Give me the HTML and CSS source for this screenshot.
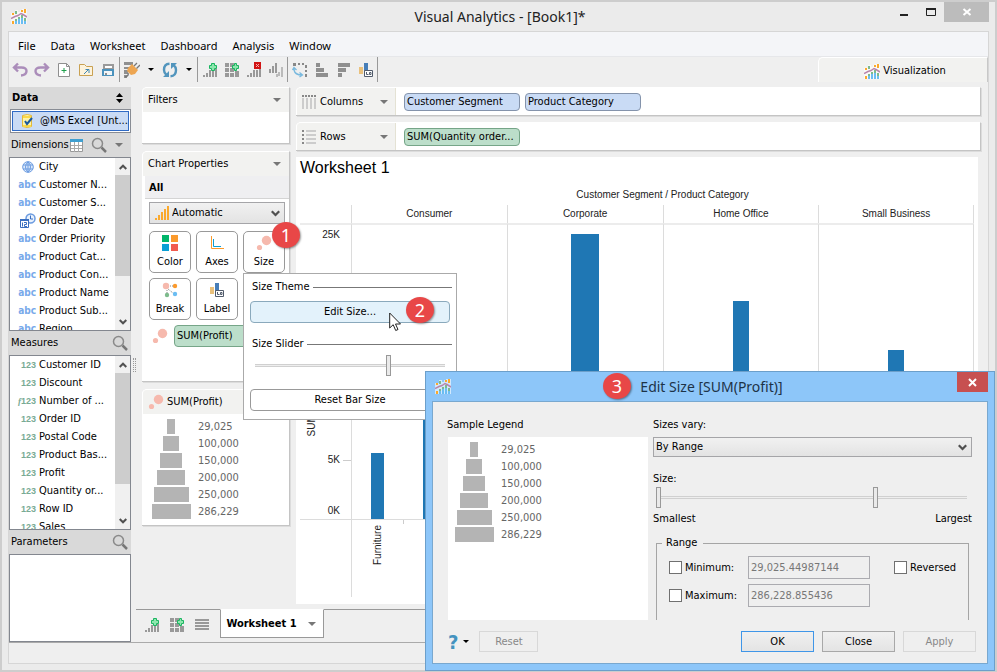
FILE: index.html
```
<!DOCTYPE html>
<html lang="en">
<head>
    <meta charset="UTF-8">
    <meta name="viewport" content="width=device-width, initial-scale=1.0">
    <title>Visual Analytics - [Book1]*</title>
    <link rel="stylesheet" href="styles.css">
</head>
<body>

<!-- shared icons -->
<svg class="sprite" aria-hidden="true">
    <symbol id="i-logo" viewBox="0 0 16 15">
        <path fill="#fff" opacity=".6" d="M0 4h4V1h3v2h2V1h2V0h5v15H0z"/>
        <path fill="#fba92c" d="M1 4h2v2H1zM10 1h2v2h-2zM13 0h2v4h-2zM1 12h2v3H1z"/>
        <path fill="#7dbb8c" d="M4 2h2v3H4zM4 10h2v2H4zM10 6h2v3h-2zM13 9h2v3h-2zM7 8h2v2H7z"/>
        <path fill="#6bbdf2" d="M4 12h2v3H4zM7 10h2v5H7zM10 9h2v6h-2zM13 12h2v3h-2z"/>
        <path fill="none" stroke="#b886ab" stroke-width="1.5" d="M0 9.5l4-2 3-1 3-2 2 1 4 2.500"/>
    </symbol>
    <symbol id="i-undo" viewBox="0 0 16 16">
        <path fill="none" stroke="#ab8dba" stroke-width="2.400" d="M6 1.500L2 5.500l4 4M2 5.500h7.500q5 0 5 3.500 0 4-5.500 4.500"/>
    </symbol>
    <symbol id="i-new" viewBox="0 0 16 16">
        <path fill="#fff" stroke="#8f8f8f" d="M2.500 1.500h8l3 3v10h-11z"/>
        <path fill="none" stroke="#8f8f8f" d="M10.500 1.500v3h3"/>
        <path stroke="#1fa04c" d="M5.500 8.500h5M8 6v5"/>
    </symbol>
    <symbol id="i-open" viewBox="0 0 16 16">
        <path fill="#fdf3dc" stroke="#c9a152" d="M1.500 2.500h5l2 2h6v9h-13z"/>
        <path fill="none" stroke="#3d87b5" d="M6 12l5-5M7.500 7.500h3.500v3.500"/>
    </symbol>
    <symbol id="i-save" viewBox="0 0 16 16">
        <path fill="#9a9a9a" d="M3 2h11v5H3z"/>
        <path fill="#fff" d="M5 4h7v2H5z"/>
        <path fill="#4a92bd" d="M2 7h12v7H2z"/>
        <path fill="#f2f5f7" d="M4 9h8v4H4z"/>
        <path fill="#8f8f8f" d="M5 11h2v2H5z"/>
    </symbol>
    <symbol id="i-plug" viewBox="0 0 16 16">
        <path fill="#8f8f8f" d="M0 0h9v3H0zM0 5h5v2H0zM0 8h4v4H0zM0 13h3v3H0z"/>
        <path fill="#eda551" d="M8 2l6 6-3 4-4 1-4-4 1-3z"/>
        <path fill="none" stroke="#777" stroke-width="1.300" d="M10 4l3-3M12.500 6.500L16 3M4 11q1 3-3 4"/>
    </symbol>
    <symbol id="i-refresh" viewBox="0 0 16 16">
        <path fill="none" stroke="#5295bd" stroke-width="2.400" d="M7.500 1.800Q2 2 2 8q0 3 2.500 5M8.500 14.200Q14 14 14 8q0-3-2.500-5"/>
        <path fill="#5295bd" d="M1 15h6V9zM15 1H9v6z"/>
    </symbol>
    <symbol id="i-add-bars" viewBox="0 0 16 16">
        <path fill="#999" d="M1 13h2v2H1zM4 11h2v4H4zM7 8h2v7H7zM10 9h2v6h-2zM13 7h2v8h-2z"/>
        <path fill="#8ee6ae" stroke="#1bb561" d="M9.500 1.500h3v2h2v3h-2v2h-3v-2h-2v-3h2z"/>
    </symbol>
    <symbol id="i-add-grid" viewBox="0 0 16 16">
        <path fill="#999" d="M1 1h4v4H1zM6 1h4v4H6zM1 6h4v4H1zM6 6h4v4H6zM11 9h4v2h-4zM1 11h4v4H1zM6 11h4v4H6zM11 11h4v4h-4z"/>
        <path fill="#8ee6ae" stroke="#1bb561" d="M10.500 1.500h2v2h2v3h-2v2h-2v-2h-2v-3h2z"/>
    </symbol>
    <symbol id="i-del-bars" viewBox="0 0 16 16">
        <path fill="#999" d="M1 13h2v2H1zM4 11h2v4H4zM7 8h2v7H7zM10 8h2v7h-2zM13 7h2v8h-2z"/>
        <path fill="#d21414" d="M8 0h7v7H8z"/>
        <path stroke="#f7b0b0" d="M10 2l3 3M13 2l-3 3"/>
    </symbol>
    <symbol id="i-sort" viewBox="0 0 16 16">
        <path fill="#999" d="M1 7h2v4H1zM4 4h2v7H4zM7 1h2v10H7z"/>
        <path fill="#bbb" d="M8 12h2v3H8zM10 10h2v4h-2zM13 5h2v10h-2z"/>
    </symbol>
    <symbol id="i-swap" viewBox="0 0 16 16">
        <path fill="#888" d="M1 1h3v3H1zM6 1h2v2H6zM10 1h2v2h-2zM13 3h2v3h-2zM13 8h2v2h-2zM13 12h2v3h-2z"/>
        <path fill="none" stroke="#79b9de" stroke-width="1.300" d="M2 5v3q1 5 8 5M.5 8L2 5.500 4.500 8M7.500 10.500l3 2.500-3 2"/>
    </symbol>
    <symbol id="i-asc" viewBox="0 0 16 16">
        <path fill="#8f8f8f" d="M2 1h4v4H2zM2 6h8v4H2zM2 11h12v4H2z"/>
    </symbol>
    <symbol id="i-desc" viewBox="0 0 16 16">
        <path fill="#8f8f8f" d="M2 1h12v4H2zM2 6h8v4H2zM2 11h4v4H2z"/>
    </symbol>
    <symbol id="i-label" viewBox="0 0 16 16">
        <path fill="#eac17c" d="M1 5h4v7H1z"/>
        <path fill="#477eb8" d="M6 1h4v11H6z"/>
        <path fill="#fff" stroke="#515b6b" d="M6.500 8.500h8v6h-8z"/>
        <path fill="none" stroke="#515b6b" d="M8.500 10v2.500h2M11.500 10.500h1.500v2h-1.500z"/>
    </symbol>
    <symbol id="i-size" viewBox="0 0 16 16">
        <circle cx="10.500" cy="5.500" r="4.700" fill="#f6b9ad"/>
        <circle cx="3.500" cy="12.500" r="2.600" fill="#f6b9ad"/>
    </symbol>
    <symbol id="i-search" viewBox="0 0 16 16">
        <circle cx="6.500" cy="6.500" r="5" fill="none" stroke="#8a8a8a" stroke-width="1.500"/>
        <path stroke="#777" stroke-width="2.500" d="M10.500 10.500L15 15"/>
    </symbol>
    <symbol id="i-down" viewBox="0 0 8 4"><path fill="currentColor" d="M0 0h8L4 4z"/></symbol>
    <symbol id="i-chevron" viewBox="0 0 8 6">
        <path fill="none" stroke="#505050" stroke-width="2" d="M.7 1L4 4.300 7.300 1"/>
    </symbol>
    <symbol id="i-globe" viewBox="0 0 12 12">
        <circle cx="6" cy="6" r="5.300" fill="#dbe9fb" stroke="#6b9be0"/>
        <path fill="none" stroke="#6b9be0" d="M1 4h10M1 8h10M6 1v10M6 .7q-5 5.300 0 10.600M6 .7q5 5.300 0 10.600"/>
    </symbol>
    <symbol id="i-date" viewBox="0 0 16 16">
        <circle cx="10.500" cy="5.500" r="4.500" fill="#e8f1fd" stroke="#6b9be0" stroke-width="1.500"/>
        <path fill="none" stroke="#3a6fc0" d="M10.500 2.500v3.500h2.500"/>
        <path fill="#fff" stroke="#3a6fc0" d="M.5 6.500h8v8h-8z"/>
        <path fill="#3a6fc0" d="M0 6h9v2H0z"/>
        <path fill="none" stroke="#3a6fc0" d="M2.500 9.500v4M4 9.500h2.500v2H4.500v2H7"/>
    </symbol>
</svg>

<div class="window">
    <header class="titlebar">
        <svg class="logo"><use href="#i-logo"/></svg>
        <h1>Visual Analytics - [Book1]*</h1>
        <div class="window-buttons">
            <button type="button" aria-label="Minimize"><svg width="10" height="10"><path fill="#222" d="M1 7h8v2H1z"/></svg></button>
            <button type="button" aria-label="Maximize"><svg width="10" height="10"><path fill="none" stroke="#222" d="M.5 1v7.500h9V1"/><path fill="#222" d="M0 1h10v2H0z"/></svg></button>
            <button type="button" class="close" aria-label="Close"><svg width="10" height="10"><path stroke="#fff" stroke-width="2" d="M1.500 2l7 6M8.500 2l-7 6"/></svg></button>
        </div>
    </header>

    <div class="frame">
        <nav class="menubar">
            <button type="button">File</button>
            <button type="button">Data</button>
            <button type="button">Worksheet</button>
            <button type="button">Dashboard</button>
            <button type="button">Analysis</button>
            <button type="button">Window</button>
        </nav>

        <div class="toolbar">
            <div class="tool-group first">
                <button type="button" aria-label="Undo"><svg><use href="#i-undo"/></svg></button>
                <button type="button" aria-label="Redo"><svg class="flip"><use href="#i-undo"/></svg></button>
                <button type="button" aria-label="New"><svg><use href="#i-new"/></svg></button>
                <button type="button" aria-label="Open"><svg><use href="#i-open"/></svg></button>
                <button type="button" aria-label="Save"><svg><use href="#i-save"/></svg></button>
            </div>
            <div class="tool-group">
                <button type="button" aria-label="Connect"><svg><use href="#i-plug"/></svg></button>
                <button type="button" class="caret" aria-label="Connect options"><svg><use href="#i-down"/></svg></button>
                <button type="button" aria-label="Refresh"><svg><use href="#i-refresh"/></svg></button>
                <button type="button" class="caret" aria-label="Refresh options"><svg><use href="#i-down"/></svg></button>
            </div>
            <div class="tool-group">
                <button type="button" aria-label="Add worksheet"><svg><use href="#i-add-bars"/></svg></button>
                <button type="button" aria-label="Add dashboard"><svg><use href="#i-add-grid"/></svg></button>
                <button type="button" aria-label="Delete worksheet"><svg><use href="#i-del-bars"/></svg></button>
                <button type="button" aria-label="Sort"><svg><use href="#i-sort"/></svg></button>
            </div>
            <div class="tool-group">
                <button type="button" aria-label="Swap axes"><svg><use href="#i-swap"/></svg></button>
                <button type="button" aria-label="Sort ascending"><svg><use href="#i-asc"/></svg></button>
                <button type="button" aria-label="Sort descending"><svg><use href="#i-desc"/></svg></button>
                <button type="button" aria-label="Show labels"><svg><use href="#i-label"/></svg></button>
            </div>
            <button type="button" class="view-tab"><svg class="logo"><use href="#i-logo"/></svg>Visualization</button>
        </div>

        <div class="workspace">
            <aside class="sidebar">
                <div class="side-head data-head">
                    <h2>Data</h2>
                    <svg width="7" height="10"><path d="M0 4h7L3.500 0zM0 6h7l-3.500 4z"/></svg>
                </div>
                <button type="button" class="data-source">
                    <svg width="14" height="14"><path fill="#fdf3a8" stroke="#e2b83a" d="M1.500 1.500q5-2 9 0v11q-4 2-9 0z"/><path fill="#fbd948" d="M2 2h8v2H2zM2 11h8v2H2z"/><path fill="none" stroke="#1b5a9c" stroke-width="2" d="M4 7l2 3 5-6"/></svg>
                    @MS Excel [Unt...
                </button>
                <div class="side-head">
                    <h3>Dimensions</h3>
                    <button type="button" aria-label="View data"><svg width="13" height="13"><path fill="#fff" stroke="#999" d="M.5.5h12v12H.5z"/><path fill="#3f9fd0" d="M0 0h13v3H0z"/><path fill="none" stroke="#aaa" d="M1 6.500h11M1 9.500h11M4.500 3v10M8.500 3v10"/></svg></button>
                    <button type="button" aria-label="Search dimensions"><svg width="16" height="16"><use href="#i-search"/></svg></button>
                    <button type="button" class="menu-arrow" aria-label="Dimension options"><svg width="8" height="4"><use href="#i-down"/></svg></button>
                </div>
                <div class="list">
                    <ul>
                        <li><svg width="12" height="12"><use href="#i-globe"/></svg>City</li>
                        <li><b class="abc">abc</b>Customer N...</li>
                        <li><b class="abc">abc</b>Customer S...</li>
                        <li><svg width="16" height="16"><use href="#i-date"/></svg>Order Date</li>
                        <li><b class="abc">abc</b>Order Priority</li>
                        <li><b class="abc">abc</b>Product Cat...</li>
                        <li><b class="abc">abc</b>Product Con...</li>
                        <li><b class="abc">abc</b>Product Name</li>
                        <li><b class="abc">abc</b>Product Sub...</li>
                        <li><b class="abc">abc</b>Region</li>
                    </ul>
                    <div class="scrollbar">
                        <svg class="up"><use href="#i-chevron"/></svg>
                        <div class="track"><div class="thumb" style="height:73%"></div></div>
                        <svg><use href="#i-chevron"/></svg>
                    </div>
                </div>
                <div class="side-head">
                    <h3>Measures</h3>
                    <button type="button" class="push" aria-label="Search measures"><svg width="16" height="16"><use href="#i-search"/></svg></button>
                </div>
                <div class="list">
                    <ul>
                        <li><b class="num">123</b>Customer ID</li>
                        <li><b class="num">123</b>Discount</li>
                        <li><b class="num"><i>f</i>123</b>Number of ...</li>
                        <li><b class="num">123</b>Order ID</li>
                        <li><b class="num">123</b>Postal Code</li>
                        <li><b class="num">123</b>Product Bas...</li>
                        <li><b class="num">123</b>Profit</li>
                        <li><b class="num">123</b>Quantity or...</li>
                        <li><b class="num">123</b>Row ID</li>
                        <li><b class="num">123</b>Sales</li>
                    </ul>
                    <div class="scrollbar">
                        <svg class="up"><use href="#i-chevron"/></svg>
                        <div class="track"><div class="thumb" style="height:80%"></div></div>
                        <svg><use href="#i-chevron"/></svg>
                    </div>
                </div>
                <div class="side-head">
                    <h3>Parameters</h3>
                    <button type="button" class="push" aria-label="Search parameters"><svg width="16" height="16"><use href="#i-search"/></svg></button>
                </div>
                <div class="list params"></div>
            </aside>

            <div class="splitter"></div>

            <div class="content">
                <div class="panes">
                    <section class="props">
                        <div class="card filters">
                            <div class="card-head"><h3>Filters</h3><svg><use href="#i-down"/></svg></div>
                        </div>

                        <div class="card chart-props">
                            <div class="card-head"><h3>Chart Properties</h3><svg><use href="#i-down"/></svg></div>
                            <h4>All</h4>
                            <div class="select-box mark-type">
                                <svg class="mark-icon" viewBox="0 0 14 14"><path fill="#fba92c" d="M0 12h2v2H0zM3 9h2v5H3zM6 6h2v8H6zM9 3h2v11H9zM12 0h2v14h-2z"/></svg>
                                <select aria-label="Chart type"><option>Automatic</option></select>
                                <svg class="arrow"><use href="#i-chevron"/></svg>
                            </div>
                            <div class="tiles">
                                <button type="button"><svg viewBox="0 0 16 16"><path fill="#00b56a" d="M0 0h7v7H0z"/><path fill="#fb9a2c" d="M9 0h7v7H9z"/><path fill="#0a9fd5" d="M0 9h7v7H0z"/><path fill="#f15b4e" d="M9 9h7v7H9z"/></svg>Color</button>
                                <button type="button"><svg viewBox="0 0 16 16"><path fill="none" stroke="#fb9a2c" d="M2.500 1v12.500H15"/><path fill="none" stroke="#0a9fd5" d="M4.500 4v7.500H12"/></svg>Axes</button>
                                <button type="button"><svg viewBox="0 0 16 16"><use href="#i-size"/></svg>Size</button>
                                <button type="button"><svg viewBox="0 0 16 16"><circle cx="4" cy="4" r="3.200" fill="#f6b9ad"/><circle cx="13" cy="4" r="2.200" fill="#fb9a2c"/><circle cx="5" cy="13" r="2.200" fill="#7dbb8c"/><circle cx="13" cy="12" r="2.200" fill="#6bbdf2"/><path stroke="#888" stroke-dasharray="1 1" d="M8 4h3M6 7l5 4M5 8v3"/></svg>Break</button>
                                <button type="button"><svg viewBox="0 0 16 16"><use href="#i-label"/></svg>Label</button>
                            </div>
                            <div class="size-field">
                                <svg width="16" height="16"><use href="#i-size"/></svg>
                                <span class="chip green">SUM(Profit)</span>
                            </div>
                        </div>

                        <div class="card">
                            <div class="card-head with-icon"><svg class="size-icon"><use href="#i-size"/></svg><h3>SUM(Profit)</h3></div>
                            <ul class="size-legend">
                                <li><span><i style="width:8px"></i></span>29,025</li>
                                <li><span><i style="width:16px"></i></span>100,000</li>
                                <li><span><i style="width:22px"></i></span>150,000</li>
                                <li><span><i style="width:28px"></i></span>200,000</li>
                                <li><span><i style="width:35px"></i></span>250,000</li>
                                <li><span><i style="width:39px"></i></span>286,229</li>
                            </ul>
                        </div>
                    </section>

                    <main>
                        <div class="card shelf">
                            <div class="shelf-head">
                                <svg class="shelf-icon" viewBox="0 0 14 14"><path fill="#888" d="M0 0h2v2H0zM3 0h2v2H3zM6 0h2v2H6zM9 0h2v2H9zM12 0h2v2h-2z"/><path fill="#ccc" d="M0 3h2v11H0zM4 3h2v11H4zM8 3h2v11H8zM12 3h2v11h-2z"/></svg>
                                <h3>Columns</h3>
                                <svg class="shelf-arrow"><use href="#i-down"/></svg>
                            </div>
                            <span class="chip">Customer Segment</span>
                            <span class="chip">Product Category</span>
                        </div>
                        <div class="card shelf">
                            <div class="shelf-head">
                                <svg class="shelf-icon" viewBox="0 0 14 14"><path fill="#888" d="M0 0h2v2H0zM0 4h2v2H0zM0 8h2v2H0zM0 12h2v2H0z"/><path fill="#ccc" d="M4 0h10v2H4zM4 4h10v2H4zM4 8h10v2H4zM4 12h10v2H4z"/></svg>
                                <h3>Rows</h3>
                                <svg class="shelf-arrow"><use href="#i-down"/></svg>
                            </div>
                            <span class="chip green">SUM(Quantity order...</span>
                        </div>

                        <div class="sheet">
                            <h2>Worksheet 1</h2>
                            <div class="chart">
                                <div class="chart-title">Customer Segment / Product Category</div>
                                <div class="corner"></div>
                                <div class="seg-name">Consumer</div>
                                <div class="seg-name">Corporate</div>
                                <div class="seg-name">Home Office</div>
                                <div class="seg-name last">Small Business</div>

                                <div class="axis">
                                    <span class="axis-title">SUM(Quantity ordered new)</span>
                                    <div class="ticks">
                                        <span>25K</span>
                                        <span class="tick">5K</span>
                                        <span>0K</span>
                                    </div>
                                </div>
                                <div class="plot narrow">
                                    <div class="bar" style="height:22.500%"></div>
                                    <div class="bar" style="height:48%"></div>
                                </div>
                                <div class="plot wide">
                                    <div class="bar" style="grid-column:2;height:96.800%"></div>
                                </div>
                                <div class="plot">
                                    <div class="bar" style="grid-column:2;height:74.200%"></div>
                                </div>
                                <div class="plot last">
                                    <div class="bar" style="grid-column:2;height:57.600%"></div>
                                </div>

                                <div class="corner"></div>
                                <div class="cats"><span>Furniture</span></div>
                                <div class="cats"></div>
                                <div class="cats"></div>
                                <div class="cats last"></div>
                            </div>
                        </div>
                    </main>
                </div>

                <div class="tabs">
                    <button type="button" aria-label="Add worksheet"><svg><use href="#i-add-bars"/></svg></button>
                    <button type="button" aria-label="Add dashboard"><svg><use href="#i-add-grid"/></svg></button>
                    <button type="button" aria-label="List worksheets"><svg viewBox="0 0 16 16"><path fill="#999" d="M1 2h14v2H1zM1 5h14v2H1zM1 8h14v2H1zM1 11h14v2H1z"/></svg></button>
                    <button type="button" class="tab">Worksheet 1<svg><use href="#i-down"/></svg></button>
                </div>
            </div>
        </div>
        <footer class="statusbar"></footer>
    </div>

    <!-- size popup -->
    <div class="popup">
        <h4>Size Theme</h4>
        <button type="button" class="hover">Edit Size...</button>
        <h4 class="second"><label for="size-slider">Size Slider</label></h4>
        <input type="range" id="size-slider" min="0" max="100" value="71">
        <button type="button" class="reset">Reset Bar Size</button>
    </div>

    <!-- edit size dialog -->
    <div class="dialog" role="dialog" aria-labelledby="dialog-title">
        <div class="dialog-title">
            <svg class="logo"><use href="#i-logo"/></svg>
            <h2 id="dialog-title">Edit Size [SUM(Profit)]</h2>
            <button type="button" aria-label="Close dialog"><svg width="9" height="9"><path stroke="#fff" stroke-width="2" d="M1 1l7 7M8 1L1 8"/></svg></button>
        </div>
        <form class="dialog-body">
            <div class="dialog-cols">
                <div class="sample">
                    <h3>Sample Legend</h3>
                    <ul class="size-legend">
                        <li><span><i style="width:8px"></i></span>29,025</li>
                        <li><span><i style="width:16px"></i></span>100,000</li>
                        <li><span><i style="width:22px"></i></span>150,000</li>
                        <li><span><i style="width:28px"></i></span>200,000</li>
                        <li><span><i style="width:35px"></i></span>250,000</li>
                        <li><span><i style="width:39px"></i></span>286,229</li>
                    </ul>
                </div>
                <div class="options">
                    <label for="vary">Sizes vary:</label>
                    <div class="select-box vary">
                        <select id="vary"><option>By Range</option></select>
                        <svg class="arrow"><use href="#i-chevron"/></svg>
                    </div>
                    <label for="size-from">Size:</label>
                    <div class="dual-range">
                        <input type="range" id="size-from" min="0" max="100" value="0">
                        <input type="range" class="upper" aria-label="Largest size" min="0" max="100" value="71">
                    </div>
                    <div class="range-ends"><span>Smallest</span><span>Largest</span></div>
                    <fieldset>
                        <legend>Range</legend>
                        <label><input type="checkbox">Minimum:</label>
                        <input type="text" aria-label="Minimum value" value="29,025.44987144" disabled>
                        <label class="reversed"><input type="checkbox">Reversed</label>
                        <label><input type="checkbox">Maximum:</label>
                        <input type="text" aria-label="Maximum value" value="286,228.855436" disabled>
                    </fieldset>
                </div>
            </div>
            <div class="dialog-buttons">
                <button type="button" class="help" aria-label="Help">?<svg><use href="#i-down"/></svg></button>
                <button type="button" class="btn small" disabled>Reset</button>
                <button type="button" class="btn primary">OK</button>
                <button type="button" class="btn">Close</button>
                <button type="button" class="btn" disabled>Apply</button>
            </div>
        </form>
    </div>

    <!-- numbered callouts -->
    <span class="badge badge-1">1</span>
    <span class="badge badge-2">2</span>
    <span class="badge badge-3">3</span>
    <svg class="cursor" viewBox="0 0 12 20"><path fill="#fff" stroke="#222" d="M.7 1v15l3.500-3.300 2.500 5.800 2.300-1-2.500-5.500h5z"/></svg>
</div>

</body>
</html>
```
FILE: styles.css
```
* {
    box-sizing:border-box;
}

body {
    margin:0;
    font-family:"DejaVu Sans Condensed", "DejaVu Sans", sans-serif;
    font-size:11px;
    line-height:14px;
    color:#000;
}

h1, h2, h3, h4, ul {
    margin:0;
    padding:0;
    font-size:11px;
    font-weight:normal;
    list-style:none;
}

button, input, select {
    margin:0;
    padding:0;
    border:0;
    background:none;
    font:inherit;
    color:inherit;
}

button {
    display:flex;
    align-items:center;
    justify-content:center;
}

svg {
    flex:none;
}

.sprite {
    display:none;
}

.logo {
    width:16px;
    height:15px;
}

/* window */
.window {
    position:relative;
    display:flex;
    flex-direction:column;
    height:100vh;
    min-height:600px;
    padding:0 6px 6px;
    border:2px solid #cdcdcd;
    background:#ebebeb;
}

.titlebar {
    display:grid;
    grid-template-columns:1fr auto 1fr;
    align-items:center;
    height:29px;
    padding-left:3px;
}

.titlebar h1 {
    font:14px/20px "Noto Sans", sans-serif;
    color:#222;
}

.window-buttons {
    display:flex;
    align-self:start;
    justify-content:flex-end;
}

.window-buttons button {
    width:27px;
    height:20px;
}

.window-buttons .close {
    width:45px;
    background:#bcbcbc;
}

.frame {
    flex:1;
    display:flex;
    flex-direction:column;
    min-height:0;
    border:1px solid #d6d6d6;
    background:#efefef;
}

.menubar {
    display:flex;
    gap:15px;
    height:25px;
    padding:4px 9px 0;
    background:#f4f5f8;
    border-bottom:1px solid #e6e7ea;
}

.menubar button {
    font:11px/16px "Noto Sans", sans-serif;
}

/* toolbar */
.toolbar {
    display:flex;
    height:25px;
}

.tool-group {
    display:flex;
    align-items:center;
    padding-left:1px;
    border-right:1px solid #999;
}

.tool-group.first {
    padding-left:0;
}

.tool-group button {
    width:22px;
    height:24px;
}

.tool-group button.caret {
    width:16px;
}

.tool-group svg {
    width:16px;
    height:16px;
}

.tool-group .caret svg {
    width:6px;
    height:3px;
}

.flip {
    transform:scaleX(-1);
}

.view-tab {
    width:170px;
    margin-left:auto;
    padding:2px 0 0 4px;
    gap:3px;
    background:#f2f2f0;
    border-top:1px solid #fff;
    border-left:1px solid #fff;
    border-right:1px solid #c8c8c8;
    border-radius:5px 0 0 0;
}

/* workspace */
.workspace {
    flex:1;
    display:flex;
    min-height:0;
    padding-top:5px;
    border-bottom:1px solid #aaa;
}

.statusbar {
    height:20px;
}

.sidebar {
    display:flex;
    flex-direction:column;
    width:122px;
    background:#d9d9d9;
}

.side-head {
    display:flex;
    align-items:center;
    height:24px;
    padding:0 2px;
}

.side-head h3 {
    margin-right:1px;
}

.side-head button {
    margin-right:8px;
}

.side-head button.menu-arrow {
    margin:0 6px 0 auto;
    color:#777;
}

.side-head button.push {
    margin:0 1px 0 auto;
}

.data-head {
    height:22px;
    justify-content:space-between;
    padding:0 8px 0 3px;
}

.data-head h2 {
    font-size:11px;
    font-weight:bold;
}

.data-source {
    height:24px;
    margin-left:1px;
    padding-left:10px;
    justify-content:flex-start;
    gap:5px;
    white-space:nowrap;
    border:1px solid #888c94;
    outline:1px solid #2f6ac4;
    outline-offset:-3px;
    background:#c9dbf5;
    box-shadow:inset 0 0 0 1px #fff;
}

.list {
    flex:2 1 0;
    display:flex;
    min-height:0;
    border:1px solid #83878f;
    background:#fff;
    overflow:hidden;
}

.params {
    flex-grow:1;
}

.list ul {
    flex:1;
    padding-left:8px;
}

.list li {
    display:grid;
    grid-template-columns:20px 1fr;
    gap:1px;
    align-items:center;
    height:18px;
    white-space:nowrap;
}

.list li svg {
    justify-self:center;
}

.abc, .num {
    justify-self:end;
    padding-right:2px;
    font-size:10px;
    color:#78a9ea;
}

.num {
    font-family:"Liberation Sans", Arial, sans-serif;
    font-size:9px;
    color:#79ab94;
}

.num i {
    font-family:"Liberation Serif", serif;
}

.scrollbar {
    display:flex;
    flex-direction:column;
    width:15px;
    background:#f0f0f0;
}

.scrollbar svg {
    width:8px;
    height:6px;
    margin:6px auto 5px;
}

.scrollbar .up {
    transform:rotate(180deg);
}

.scrollbar .track {
    flex:1;
}

.scrollbar .thumb {
    background:#cdcdcd;
}

.splitter {
    width:3px;
    height:14px;
    margin:auto 0 auto 2px;
    border-left:1px dotted #999;
    border-right:1px dotted #999;
}

.content {
    flex:1;
    display:flex;
    flex-direction:column;
    min-width:0;
}

.panes {
    flex:1;
    display:flex;
    gap:6px;
    min-height:0;
    padding:0 7px 5px 6px;
}

/* cards */
.card {
    background:#fff;
    border-top:1px solid #fff;
    border-right:1px solid #c4c4c4;
    border-bottom:1px solid #c4c4c4;
    border-radius:5px 0 0 0;
    box-shadow:1px 1px 0 #dcdcdc;
}

.card-head {
    display:flex;
    align-items:center;
    justify-content:space-between;
    height:24px;
    padding:0 8px 0 5px;
    background:#f2f2f0;
    border-left:1px solid #fff;
    border-radius:4px 0 0 0;
}

.card-head svg {
    width:8px;
    height:4px;
    color:#777;
}

.card-head.with-icon {
    justify-content:flex-start;
    gap:3px;
}

.card-head .size-icon {
    width:16px;
    height:16px;
}

.props {
    display:flex;
    flex-direction:column;
    gap:7px;
    width:148px;
}

.filters {
    height:57px;
}

.chart-props {
    height:231px;
}

.chart-props h4 {
    height:23px;
    margin-left:3px;
    padding:5px 4px;
    background:#efeff1;
    border-bottom:1px solid #d4d4d4;
    font-weight:bold;
}

.select-box {
    display:grid;
    align-items:center;
    border:1px solid #a5a5a8;
    background:linear-gradient(#f1f1f1, #e3e3e3);
}

.select-box > * {
    grid-area:1 / 1;
}

.select-box select {
    appearance:none;
    width:100%;
    height:20px;
    padding-left:2px;
}

.select-box .arrow {
    justify-self:end;
    width:9px;
    height:7px;
    margin-right:4px;
    pointer-events:none;
}

.mark-type {
    margin:3px 4px 0 7px;
}

.mark-type select {
    padding-left:22px;
}

.mark-icon {
    width:14px;
    height:14px;
    margin-left:5px;
}

.tiles {
    display:grid;
    grid-template-columns:repeat(3, 1fr);
    gap:5px;
    padding:7px 4px 0 7px;
}

.tiles button {
    flex-direction:column;
    justify-content:flex-end;
    gap:4px;
    height:42px;
    padding-bottom:3px;
    border:1px solid #999;
    border-radius:5px;
    background:#fff;
}

.tiles svg {
    width:16px;
    height:16px;
}

.size-field {
    display:flex;
    align-items:center;
    gap:6px;
    padding:5px 4px 0 10px;
}

.chip {
    width:116px;
    height:18px;
    padding:1px 2px;
    overflow:hidden;
    white-space:nowrap;
    border:1px solid #8493ab;
    border-radius:4px;
    background:#c9dbf5;
}

.chip.green {
    border-color:#76a588;
    background:#bcdeca;
}

.size-field .chip {
    flex:1;
    height:22px;
    padding-top:3px;
}

.size-legend {
    padding:4px 0 5px 9px;
    background:#fff;
}

.size-legend li {
    display:flex;
    align-items:center;
    gap:7px;
    height:17px;
    color:#666;
}

.size-legend span {
    display:flex;
    justify-content:center;
    width:40px;
}

.size-legend i {
    height:15px;
    background:#b4b4b4;
}

/* shelves */
main {
    flex:1;
    display:flex;
    flex-direction:column;
    gap:6px;
    min-width:0;
}

.shelf {
    display:flex;
    align-items:center;
    gap:5px;
    height:29px;
}

.shelf-head {
    display:flex;
    align-items:center;
    align-self:stretch;
    width:100px;
    margin-right:3px;
    padding:0 7px 0 5px;
    gap:4px;
    background:#f2f2f0;
    border-left:1px solid #fff;
    border-right:1px solid #e4e2d4;
    border-radius:4px 0 0 0;
}

.shelf-icon {
    width:14px;
    height:14px;
}

.shelf-arrow {
    width:8px;
    height:4px;
    margin-left:auto;
    color:#777;
}

/* chart */
.sheet {
    flex:1;
    display:flex;
    flex-direction:column;
    min-height:0;
    margin-right:3px;
    padding:1px 4px 7px;
    background:#fff;
    font-family:"Liberation Sans", Arial, sans-serif;
    color:#222;
}

.sheet h2 {
    font-size:16px;
    line-height:20px;
    color:#000;
}

.chart {
    flex:1;
    display:grid;
    grid-template-columns:51px repeat(4, 1fr);
    grid-template-rows:27px 18px 1fr 77px;
    min-height:0;
    font-size:10px;
    line-height:12px;
}

.chart-title {
    grid-column:2 / -1;
    padding-top:11px;
    text-align:center;
}

.seg-name {
    padding-top:3px;
    text-align:center;
}

.seg-name, .plot, .cats {
    border-left:1px solid #dcdcdc;
}

.chart .last {
    border-right:1px solid #dcdcdc;
}

.axis {
    display:flex;
    justify-content:space-between;
    border-top:2px solid #ececec;
    border-bottom:1px solid #dcdcdc;
    padding-left:6px;
}

.axis-title {
    align-self:center;
    margin-top:4px;
    writing-mode:vertical-rl;
    transform:rotate(180deg);
    white-space:nowrap;
}

.ticks {
    display:grid;
    grid-template-rows:auto 1fr 51px;
    align-items:end;
    padding:4px 0 2px;
    text-align:right;
}

.ticks span {
    padding-right:11px;
}

.ticks .tick {
    background:linear-gradient(#ccc, #ccc) right 6px / 8px 1px no-repeat;
}

.plot {
    display:grid;
    grid-template-columns:repeat(3, 1fr);
    align-items:end;
    justify-items:center;
    border-top:2px solid #ececec;
    border-bottom:1px solid #dcdcdc;
}

.bar {
    width:16px;
    background:#1f77b4;
}

.narrow .bar {
    width:13px;
}

.wide .bar {
    width:28px;
}

.cats {
    display:grid;
    grid-template-columns:repeat(3, 1fr);
    justify-items:center;
    background:linear-gradient(#ccc, #ccc) 33.333% 0 / 1px 4px no-repeat;
}

.cats span {
    padding-bottom:5px;
    writing-mode:vertical-rl;
    transform:rotate(180deg);
    text-align:right;
}

/* worksheet tabs */
.tabs {
    display:flex;
    height:33px;
    border-top:1px solid #999;
}

.tabs button {
    width:25px;
    height:30px;
}

.tabs button:first-child {
    margin-left:3px;
}

.tabs svg {
    width:16px;
    height:16px;
}

.tabs .tab {
    width:104px;
    height:29px;
    margin:-1px 0 0 6px;
    padding-right:2px;
    gap:11px;
    border:1px solid #999;
    border-top-color:#fff;
    background:#fff;
    font-weight:bold;
}

.tabs .tab svg {
    width:8px;
    height:4px;
    color:#777;
}

/* size popup */
.popup {
    position:absolute;
    left:241px;
    top:271px;
    width:214px;
    padding:6px 6px 8px;
    border:1px solid #aaa;
    background:#fff;
}

.popup h4 {
    display:flex;
    align-items:center;
    gap:3px;
    height:14px;
    padding-left:2px;
    margin-right:-2px;
}

.popup h4::after {
    content:"";
    flex:1;
    height:1px;
    background:#777;
}

.popup h4.second {
    margin-top:14px;
}

.popup button {
    width:100%;
    height:22px;
    border:1px solid #999;
    border-radius:4px;
    background:#fff;
}

.popup .hover {
    margin-top:7px;
    border-color:#8aa9bc;
    background:#e3f2fb;
}

.popup .reset {
    margin-top:13px;
}

input[type="range"] {
    appearance:none;
    display:block;
    width:100%;
    height:21px;
    background:linear-gradient(#d0d0d0 1px, #eee 1px, #eee 2px, #d0d0d0 2px) center / 100% 3px no-repeat;
}

input[type="range"]::-webkit-slider-thumb {
    appearance:none;
    width:5px;
    height:21px;
    border:1px solid #999;
    background:#eaeaea;
}

.popup input[type="range"] {
    width:190px;
    margin:4px 0 0 5px;
}

/* edit size dialog */
.dialog {
    position:absolute;
    right:0;
    bottom:-1px;
    width:570px;
    height:300px;
    display:flex;
    flex-direction:column;
    padding:0 6px 6px;
    border:1px solid #6c9fca;
    background:#8dc6f9;
}

.dialog-title {
    display:grid;
    grid-template-columns:1fr auto 1fr;
    align-items:center;
    height:29px;
    padding-left:3px;
}

.dialog-title h2 {
    font:14px/20px "Noto Sans", sans-serif;
    color:#1d3347;
}

.dialog-title button {
    align-self:start;
    justify-self:end;
    width:31px;
    height:20px;
    background:#c75050;
}

.dialog-body {
    flex:1;
    display:flex;
    flex-direction:column;
    min-height:0;
    border:1px solid #79a8cf;
    background:#efefef;
}

.dialog-cols {
    flex:1;
    display:flex;
    gap:5px;
    padding:16px 15px 0 14px;
}

.sample {
    display:flex;
    flex-direction:column;
    width:201px;
}

.sample h3 {
    height:19px;
}

.sample .size-legend {
    flex:1;
    margin-left:1px;
    padding:4px 6px;
}

.options {
    flex:1;
    display:flex;
    flex-direction:column;
}

.vary {
    height:20px;
    margin:5px 0 15px;
}

.vary select {
    height:18px;
}

.dual-range {
    display:grid;
    margin:1px 5px 0 3px;
}

.dual-range input {
    grid-area:1 / 1;
}

.dual-range .upper {
    background:none;
}

.range-ends {
    display:flex;
    justify-content:space-between;
    margin-top:4px;
}

fieldset {
    flex:1;
    display:grid;
    grid-template-columns:79px 122px 1fr;
    grid-auto-rows:23px;
    row-gap:5px;
    align-items:center;
    margin:10px 3px 0;
    padding:6px 0 0 12px;
    border:1px solid #a5a5a5;
    border-bottom:0;
}

legend {
    height:14px;
    padding:0 6px 0 4px;
    margin-left:-7px;
}

fieldset label {
    display:flex;
    align-items:center;
    gap:3px;
}

fieldset .reversed {
    margin-left:24px;
}

input[type="checkbox"] {
    appearance:none;
    width:13px;
    height:13px;
    border:1px solid #707070;
    background:#fff;
}

input[type="text"] {
    width:100%;
    height:23px;
    padding:0 2px;
    border:1px solid #ababb0;
    color:#777;
}

.dialog-buttons {
    display:flex;
    gap:8px;
    padding:11px;
}

.btn {
    width:73px;
    height:21px;
    border:1px solid #a8a8a8;
    background:linear-gradient(#f0f0f0, #e4e4e4);
}

.btn.small {
    width:59px;
    margin:0 auto 0 2px;
}

.btn.primary {
    border-color:#3f96e8;
}

.btn:disabled {
    border-color:#d8d8d8;
    background:#efefef;
    color:#888;
}

.help {
    gap:5px;
    margin-left:4px;
    font-size:20px;
    font-weight:bold;
    color:#4493bf;
}

.help svg {
    width:6px;
    height:3px;
    color:#000;
}

/* callouts */
.badge {
    position:absolute;
    width:28px;
    height:26px;
    border-radius:50%;
    background:#e84747;
    box-shadow:1px 1px 2px rgba(0,0,0,0.4);
    color:#fff;
    font:18px/26px "Noto Sans", sans-serif;
    text-align:center;
}

.badge-1 {
    left:270px;
    top:220px;
}

.badge-2 {
    left:404px;
    top:295px;
}

.badge-3 {
    left:601px;
    top:371px;
}

.cursor {
    position:absolute;
    left:387px;
    top:310px;
    width:12px;
    height:20px;
}
```
